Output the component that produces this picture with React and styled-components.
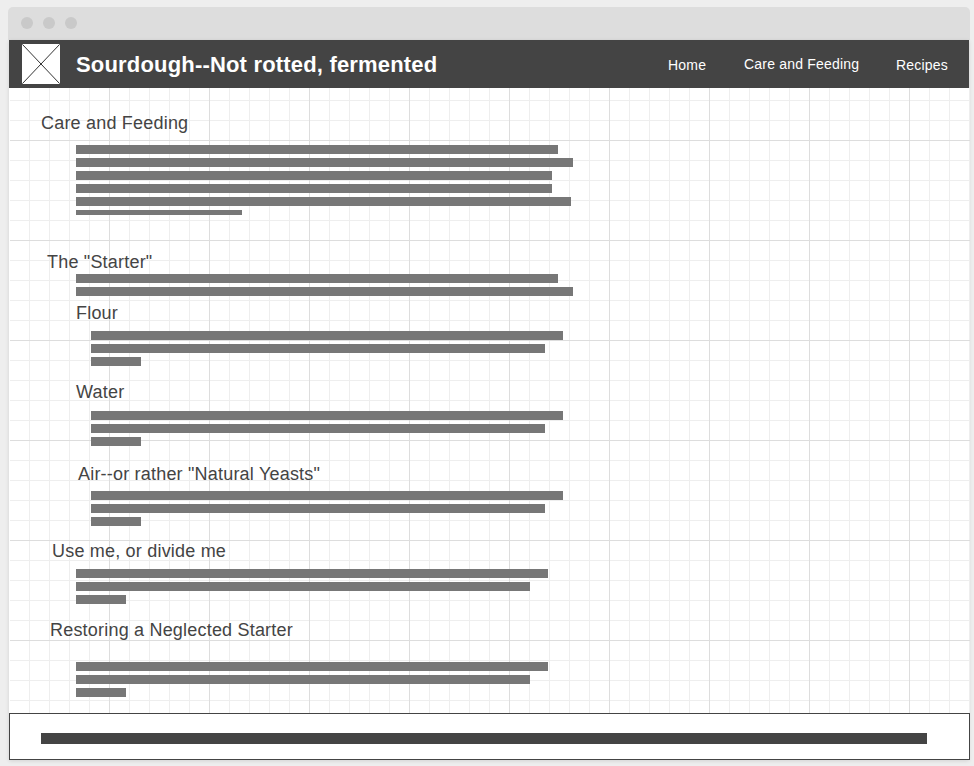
import React from "react";
import styled, { createGlobalStyle } from "styled-components";

const GlobalStyle = createGlobalStyle`
  * { box-sizing: border-box; }
  html, body { height: 766px; overflow: hidden; }
  body {
    margin: 0;
    background: #eee;
    font-family: "Liberation Sans", Arial, sans-serif;
    color: #444;
  }
`;

const Stage = styled.div`
  height: 766px;
  padding: 7px 4px 0 8px;
`;

const BrowserWindow = styled.div`
  display: flex;
  flex-direction: column;
  width: 962px;
`;

const TitleBar = styled.div`
  display: flex;
  gap: 10px;
  height: 33px;
  padding: 10px 13px 0;
  background: #ddd;
  border-radius: 5px 5px 0 0;
`;

const Dot = styled.span`
  width: 12px;
  height: 12px;
  border-radius: 50%;
  background: #c9c9c9;
`;

const Page = styled.div`
  display: flex;
  flex-direction: column;
  width: 960px;
  height: 720px;
  margin-left: 1px;
  background: #fff;
  box-shadow: 0 1px 4px rgba(0, 0, 0, 0.12);
`;

const Header = styled.header`
  display: flex;
  flex: none;
  width: 960px;
  height: 48px;
  padding: 4px 0 0 13px;
  background: #444;
  color: #fff;
`;

const Logo = styled.svg`
  display: block;
  width: 38px;
  height: 40px;
`;

const SiteTitle = styled.h1`
  width: 592px;
  margin: 0 0 0 16px;
  font-size: 22px;
  line-height: 42px;
  letter-spacing: 0.18px;
  white-space: nowrap;
`;

const Nav = styled.nav`
  display: flex;
  font-size: 14px;
  letter-spacing: 0.2px;
  line-height: 16px;
  white-space: nowrap;
`;

const NavLink = styled.a`
  width: ${(p) => p.$width}px;
  padding-top: ${(p) => p.$top}px;
`;

const Content = styled.main`
  flex: none;
  width: 960px;
  height: 625px;
  margin-left: 1px;
  padding-top: 25px;
  background-image:
    linear-gradient(90deg, transparent 99px, #ddd 99px),
    linear-gradient(transparent 99px, #ddd 99px),
    linear-gradient(90deg, transparent 19px, #eee 19px),
    linear-gradient(transparent 19px, #eee 19px);
  background-size: 100px 100px, 100px 100px, 20px 20px, 20px 20px;
  background-position: 0 -47px, 0 -47px, 0 -7px, 0 -7px;
`;

const Section = styled.section`
  height: ${(p) => p.$height}px;
`;

const Heading = styled.h2`
  height: 20px;
  margin: 0 0 ${(p) => p.$gap}px ${(p) => p.$indent}px;
  font-size: 18px;
  font-weight: 400;
  line-height: 20px;
  letter-spacing: 0.2px;
  white-space: nowrap;
`;

const Lines = styled.div`
  display: flex;
  flex-direction: column;
  gap: 4px;
  margin-left: ${(p) => p.$indent}px;
`;

const Line = styled.div`
  width: ${(p) => p.$width}px;
  height: ${(p) => p.$height || 9}px;
  background: #777;
`;

const Footer = styled.footer`
  flex: none;
  width: 961px;
  height: 47px;
  padding: 19px 0 0 31px;
  background: #fff;
  border: 1px solid #444;
`;

const FooterLine = styled.div`
  width: 886px;
  height: 11px;
  background: #444;
`;

const links = [
  { label: "Home", width: 76, top: 13 },
  { label: "Care and Feeding", width: 152, top: 12 },
  { label: "Recipes", width: 60, top: 13 },
];

const sections = [
  { title: "Care and Feeding", height: 139, indent: 31, gap: 12, textIndent: 66, lines: [482, 497, 476, 476, 495, 166], clipLast: true },
  { title: 'The "Starter"', height: 51, indent: 37, gap: 2, textIndent: 66, lines: [482, 497] },
  { title: "Flour", height: 79, indent: 66, gap: 8, textIndent: 81, lines: [472, 454, 50] },
  { title: "Water", height: 82, indent: 66, gap: 9, textIndent: 81, lines: [472, 454, 50] },
  { title: 'Air--or rather "Natural Yeasts"', height: 77, indent: 68, gap: 7, textIndent: 81, lines: [472, 454, 50] },
  { title: "Use me, or divide me", height: 79, indent: 42, gap: 8, textIndent: 66, lines: [472, 454, 50] },
  { title: "Restoring a Neglected Starter", height: 77, indent: 40, gap: 22, textIndent: 66, lines: [472, 454, 50] },
];

export default function App() {
  return (
    <>
      <GlobalStyle />
      <Stage>
        <BrowserWindow>
          <TitleBar>
            <Dot />
            <Dot />
            <Dot />
          </TitleBar>
          <Page>
            <Header>
              <Logo viewBox="0 0 38 40">
                <rect width="38" height="40" rx="1" fill="#fff" />
                <path d="M0.5 0.5L37.5 39.5M37.5 0.5L0.5 39.5" stroke="#333" strokeWidth="1" />
              </Logo>
              <SiteTitle>Sourdough--Not rotted, fermented</SiteTitle>
              <Nav>
                {links.map((l) => (
                  <NavLink key={l.label} $width={l.width} $top={l.top}>{l.label}</NavLink>
                ))}
              </Nav>
            </Header>
            <Content>
              {sections.map((s) => (
                <Section key={s.title} $height={s.height}>
                  <Heading $indent={s.indent} $gap={s.gap}>{s.title}</Heading>
                  <Lines $indent={s.textIndent}>
                    {s.lines.map((w, i) => (
                      <Line key={i} $width={w} $height={s.clipLast && i === s.lines.length - 1 ? 5 : 9} />
                    ))}
                  </Lines>
                </Section>
              ))}
            </Content>
            <Footer>
              <FooterLine />
            </Footer>
          </Page>
        </BrowserWindow>
      </Stage>
    </>
  );
}
